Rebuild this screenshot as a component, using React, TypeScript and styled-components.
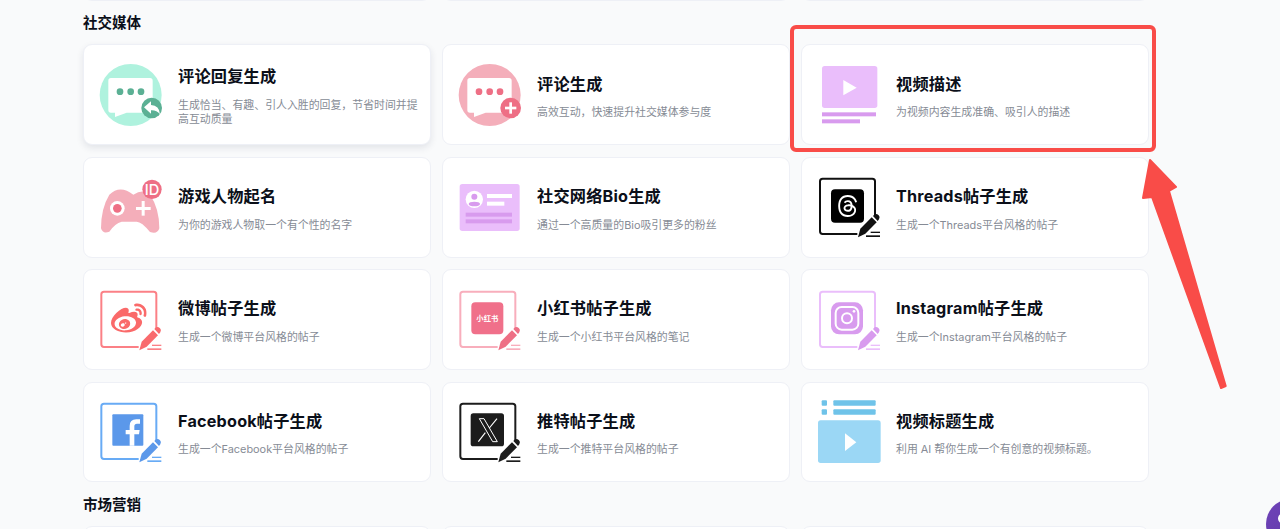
import React from 'react';
import styled, { createGlobalStyle } from 'styled-components';
import { FaThreads, FaWeibo } from 'react-icons/fa6';

const GlobalStyle = createGlobalStyle`
  html, body {
    margin: 0;
    padding: 0;
    background: #f9fafb;
    overflow: hidden;
  }
  * { box-sizing: border-box; }
`;

const Page = styled.div`
  position: relative;
  width: 1280px;
  height: 529px;
  overflow: hidden;
  background: #f9fafb;
  font-family: Inter, 'Noto Sans CJK SC', sans-serif;
`;

const Main = styled.main`
  width: 1066px;
  margin: -100.3px 0 0 83px;
  display: flex;
  flex-direction: column;
`;

const SectionTitle = styled.h2`
  margin: 12.7px 0 11.3px;
  font-size: 14.5px;
  line-height: 20px;
  font-weight: 700;
  color: #0b0f19;
`;

const Grid = styled.div`
  display: grid;
  grid-template-columns: repeat(3, 1fr);
  gap: 11.6px 11px;
`;

const Card = styled.div<{ $raised?: boolean }>`
  height: 100.8px;
  display: flex;
  align-items: center;
  gap: 15px;
  padding: 0 10px 0 15px;
  background: #fff;
  border: 1px solid #eef0f6;
  border-radius: 9px;
  box-shadow: ${(p) => (p.$raised ? '0 3px 7px rgba(30, 40, 70, 0.1)' : 'none')};
`;

const IconSlot = styled.svg`
  flex: none;
  width: 64px;
  height: 64px;
`;

const CardText = styled.div`
  min-width: 0;
  padding-top: 1.5px;
`;

const CardTitle = styled.div`
  font-size: 16.2px;
  line-height: 24px;
  font-weight: 700;
  letter-spacing: 0.2px;
  color: #0b0f19;
  margin-bottom: 9.5px;
`;

const CardDesc = styled.div`
  font-size: 10.9px;
  line-height: 14.5px;
  color: #868b95;
`;

const Highlight = styled.div`
  position: absolute;
  left: 790px;
  top: 25px;
  width: 366px;
  height: 127px;
  border: 4px solid #f94c48;
  border-radius: 6px;
`;

const Arrow = styled.svg`
  position: absolute;
  left: 1130px;
  top: 150px;
  width: 110px;
  height: 250px;
`;

const ChatBubble = styled.div`
  position: absolute;
  left: 1266px;
  top: 499px;
  width: 50px;
  height: 50px;
  border-radius: 50%;
  background: linear-gradient(135deg, #6f42b8, #5f3aa6);
  &::after {
    content: '';
    position: absolute;
    left: 12px;
    top: 15px;
    width: 8px;
    height: 9px;
    border-radius: 50%;
    background: #fff;
  }
`;

type PostProps = { frame: string; pen: string; lines?: string; startX?: number; children: React.ReactNode };

// framed logo with a pencil on the lower right corner
const PostIcon = ({ frame, pen, lines, startX = 0, children }: PostProps) => (
  <IconSlot viewBox={`${startX} 0 192 192`}>
    <path
      d="M172 123V19Q172 11 164 11H15Q7 11 7 19V169Q7 177 15 177H119"
      fill="none"
      stroke={frame}
      strokeWidth="6"
    />
    {children}
    <path d="M121 187L128 161L162 127L177 142L143 176Z" fill={pen} />
    <path d="M166 123L171 118Q177 115 183 121Q189 127 184 133L180 138Z" fill={pen} />
    <rect x="159" y="170" width="28" height="4" fill={lines ?? pen} />
    <rect x="145" y="181" width="42" height="5" fill={lines ?? pen} />
  </IconSlot>
);

const CommentIcon = ({ bg, accent, children }: { bg: string; accent: string; children: React.ReactNode }) => (
  <IconSlot viewBox="87 189 192 192">
    <circle cx="182" cy="285" r="93" fill={bg} />
    <path
      d="M123 234H240Q248 234 248 242V330Q248 338 240 338H170L135 351V338H123Q115 338 115 330V242Q115 234 123 234Z"
      fill="#fff"
    />
    <circle cx="150" cy="275" r="10" fill={accent} />
    <circle cx="182" cy="275" r="10" fill={accent} />
    <circle cx="213" cy="275" r="10" fill={accent} />
    <circle cx="245" cy="324" r="31" fill={accent} />
    {children}
  </IconSlot>
);

const GameIcon = () => (
  <IconSlot viewBox="87 525 192 192">
    <path
      d="M118 584Q150 553 190 584Q220 565 240 584Q268 625 268 685Q262 704 240 696Q215 665 200 665H155Q135 670 118 695Q98 703 93 685Q93 625 118 584Z"
      fill="#f4aeba"
    />
    <circle cx="142" cy="625" r="22" fill="#fff" />
    <circle cx="142" cy="625" r="13" fill="#ee6f85" />
    <rect x="198" y="621" width="44" height="9" fill="#fff" />
    <rect x="215" y="603" width="9" height="44" fill="#fff" />
    <circle cx="246" cy="568" r="29" fill="#ee6f85" />
    <text x="246" y="584" textAnchor="middle" fontSize="44" fontWeight="500" fill="#fff">
      ID
    </text>
  </IconSlot>
);

const BioIcon = () => (
  <IconSlot viewBox="55 525 192 192">
    <rect x="60" y="552" width="180" height="141" rx="8" fill="#eabefb" />
    <circle cx="104" cy="598" r="26" fill="#fff" />
    <circle cx="104" cy="590" r="9" fill="#d89bee" />
    <ellipse cx="104" cy="612" rx="17" ry="7" fill="#d89bee" />
    <rect x="142" y="582" width="75" height="12" fill="#fff" />
    <rect x="142" y="605" width="52" height="12" fill="#fff" />
    <rect x="78" y="638" width="139" height="12" fill="#d89bee" />
    <rect x="78" y="658" width="139" height="12" fill="#d89bee" />
  </IconSlot>
);

const VideoDescIcon = () => (
  <IconSlot viewBox="111 189 192 192">
    <rect x="126" y="198" width="166" height="126" rx="8" fill="#eabefb" />
    <path d="M190 240L230 263L190 286Z" fill="#fff" />
    <rect x="126" y="337" width="162" height="12" fill="#d89bee" />
    <rect x="126" y="358" width="114" height="12" fill="#d89bee" />
  </IconSlot>
);

const VideoTitleIcon = () => (
  <IconSlot viewBox="81 405 192 192">
    <rect x="95" y="406" width="16" height="16" rx="3" fill="#6fc3e9" />
    <rect x="95" y="433" width="16" height="16" rx="3" fill="#6fc3e9" />
    <rect x="130" y="406" width="127" height="16" rx="3" fill="#6fc3e9" />
    <rect x="130" y="433" width="127" height="16" rx="3" fill="#6fc3e9" />
    <rect x="84" y="466" width="188" height="128" rx="8" fill="#9bd7f5" />
    <path d="M165 505L199 532L165 558Z" fill="#fff" />
  </IconSlot>
);

const cards = [
  {
    title: '评论回复生成',
    desc: '生成恰当、有趣、引人入胜的回复\uFF0C节省时间并提高互动质量',
    raised: true,
    icon: (
      <CommentIcon bg="#aff2de" accent="#5bb094">
        <path d="M222 322L243 304V315Q268 316 270 343Q260 330 243 331V341Z" fill="#fff" />
      </CommentIcon>
    ),
  },
  {
    title: '评论生成',
    desc: '高效互动\uFF0C快速提升社交媒体参与度',
    icon: (
      <CommentIcon bg="#f4aeba" accent="#ee6f85">
        <rect x="228" y="320" width="34" height="8" fill="#fff" />
        <rect x="241" y="307" width="8" height="34" fill="#fff" />
      </CommentIcon>
    ),
  },
  { title: '视频描述', desc: '为视频内容生成准确、吸引人的描述', icon: <VideoDescIcon /> },
  { title: '游戏人物起名', desc: '为你的游戏人物取一个有个性的名字', icon: <GameIcon /> },
  { title: '社交网络Bio生成', desc: '通过一个高质量的Bio吸引更多的粉丝', icon: <BioIcon /> },
  {
    title: 'Threads帖子生成',
    desc: '生成一个Threads平台风格的帖子',
    icon: (
      <PostIcon frame="#111" pen="#111" startX={-2}>
        <rect x="40" y="43" width="99" height="100" rx="12" fill="#000" />
        <FaThreads size={70} x={55} y={58} color="#fff" />
      </PostIcon>
    ),
  },
  {
    title: '微博帖子生成',
    desc: '生成一个微博平台风格的帖子',
    icon: (
      <PostIcon frame="#fb8086" pen="#f96a6d" lines="#fb8086">
        <FaWeibo size={107} x={36} y={40} color="#fa6a6a" />
      </PostIcon>
    ),
  },
  {
    title: '小红书帖子生成',
    desc: '生成一个小红书平台风格的笔记',
    icon: (
      <PostIcon frame="#f8aebc" pen="#ee6f85" lines="#f8aebc">
        <rect x="40" y="43" width="96" height="96" rx="12" fill="#f0708a" />
        <text x="88" y="100" textAnchor="middle" fontSize="22" fontWeight="700" fill="#fff">
          小红书
        </text>
      </PostIcon>
    ),
  },
  {
    title: 'Instagram帖子生成',
    desc: '生成一个Instagram平台风格的帖子',
    icon: (
      <PostIcon frame="#eabefb" pen="#d89bee" lines="#eabefb" startX={-2}>
        <rect x="40" y="43" width="96" height="96" rx="24" fill="#d89bee" />
        <rect x="54" y="57" width="68" height="68" rx="18" fill="none" stroke="#fff" strokeWidth="6" />
        <circle cx="88" cy="91" r="15" fill="none" stroke="#fff" strokeWidth="6" />
        <circle cx="109" cy="70" r="4" fill="#fff" />
      </PostIcon>
    ),
  },
  {
    title: 'Facebook帖子生成',
    desc: '生成一个Facebook平台风格的帖子',
    icon: (
      <PostIcon frame="#68abf5" pen="#5b98ea" lines="#68abf5">
        <rect x="40" y="43" width="93" height="94" rx="3" fill="#5b98ea" />
        <path
          d="M92 137V103H80V90H92V78Q92 58 112 58H123V71H114Q106 71 106 79V90H122L120 103H106V137Z"
          fill="#fff"
        />
      </PostIcon>
    ),
  },
  {
    title: '推特帖子生成',
    desc: '生成一个推特平台风格的帖子',
    icon: (
      <PostIcon frame="#1c1c1c" pen="#1c1c1c">
        <rect x="38" y="40" width="100" height="99" rx="8" fill="#1c1c1c" />
        <path d="M64 56H78L118 125H104Z" fill="none" stroke="#fff" strokeWidth="3" />
        <path d="M117 56L94 84M82 98L61 125" fill="none" stroke="#fff" strokeWidth="3.5" />
      </PostIcon>
    ),
  },
  { title: '视频标题生成', desc: '利用 AI 帮你生成一个有创意的视频标题。', icon: <VideoTitleIcon /> },
];

const App = () => (
  <Page>
    <GlobalStyle />
    <Main>
      <Grid>
        <Card />
        <Card />
        <Card />
      </Grid>
      <SectionTitle>社交媒体</SectionTitle>
      <Grid>
        {cards.map((card) => (
          <Card key={card.title} $raised={card.raised}>
            {card.icon}
            <CardText>
              <CardTitle>{card.title}</CardTitle>
              <CardDesc>{card.desc}</CardDesc>
            </CardText>
          </Card>
        ))}
      </Grid>
      <SectionTitle>市场营销</SectionTitle>
      <Grid>
        <Card />
        <Card />
        <Card />
      </Grid>
    </Main>
    <Highlight />
    <Arrow viewBox="0 0 110 250">
      <path
        d="M20 10L46 37L39 41L95.7 236L91 238L22 47L13 48Z"
        fill="#f94c48"
        stroke="#f94c48"
        strokeWidth="2"
        strokeLinejoin="round"
      />
    </Arrow>
    <ChatBubble />
  </Page>
);

export default App;
